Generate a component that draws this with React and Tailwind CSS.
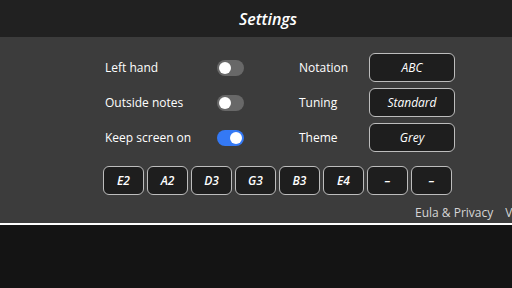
import { useState } from "react";

const STRINGS = ["E2", "A2", "D3", "G3", "B3", "E4", "–", "–"];

function Toggle({ on }) {
  return (
    <div className={`w-[27px] h-[16px] rounded-full flex items-center px-[2px] ${on ? "bg-[#3479f5] justify-end" : "bg-[#686868] justify-start"}`}>
      <div className="w-[12px] h-[12px] rounded-full bg-white" />
    </div>
  );
}

function Pill({ children, className = "" }) {
  return (
    <div className={`h-[29px] rounded-[6px] border-[1.5px] border-[#bdbdbd] bg-[#1e1e1e] flex items-center justify-center italic text-[12px] text-white ${className}`}>
      {children}
    </div>
  );
}

export default function App() {
  const [left] = useState([
    { label: "Left hand", on: false },
    { label: "Outside notes", on: false },
    { label: "Keep screen on", on: true },
  ]);
  const right = [
    { label: "Notation", value: "ABC" },
    { label: "Tuning", value: "Standard" },
    { label: "Theme", value: "Grey" },
  ];

  return (
    <div className="w-[512px] h-[288px] overflow-hidden bg-[#141414] flex flex-col" style={{ fontFamily: "'Open Sans', 'DejaVu Sans', sans-serif" }}>
      <div className="h-[37px] bg-[#212121] flex items-center justify-center pl-[24px]">
        <span className="italic text-[16px] font-semibold text-white">Settings</span>
      </div>

      <div className="h-[186px] bg-[#3c3c3c] flex flex-col">
        <div className="flex pl-[105px] pt-[16px]">
          <div className="flex flex-col gap-[6px] w-[194px]">
            {left.map(r => (
              <div key={r.label} className="h-[29px] flex items-center">
                <span className="w-[112px] text-[12px] text-white">{r.label}</span>
                <Toggle on={r.on} />
              </div>
            ))}
          </div>
          <div className="flex flex-col gap-[6px]">
            {right.map(r => (
              <div key={r.label} className="h-[29px] flex items-center">
                <span className="w-[70px] text-[12px] text-white">{r.label}</span>
                <Pill className="w-[86px]">{r.value}</Pill>
              </div>
            ))}
          </div>
        </div>

        <div className="flex gap-[3px] pl-[103px] mt-[14px]">
          {STRINGS.map((s, i) => (
            <Pill key={i} className="w-[41px] h-[28px] font-semibold">{s}</Pill>
          ))}
        </div>

        <div className="flex items-center mt-[9px] pl-[415px] gap-[12px] text-[12px] text-[#d6d6d6] whitespace-nowrap">
          <span>Eula &amp; Privacy</span>
          <span>V</span>
        </div>
      </div>

      <div className="h-[1.5px] bg-white" />
      <div className="flex-1 bg-[#141414]" />
    </div>
  );
}
